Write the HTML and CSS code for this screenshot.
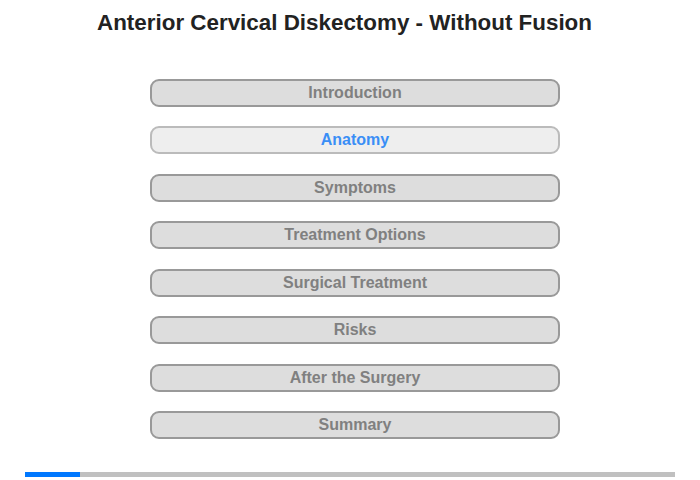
FILE: index.html
```html
<!DOCTYPE html>
<html>
<head>
<meta charset="utf-8">
<link rel="stylesheet" href="styles.css">
</head>
<body>
<div class="page">
  <h1 class="title">Anterior Cervical Diskectomy - Without Fusion</h1>
  <nav class="menu">
    <div class="item">Introduction</div>
    <div class="item active">Anatomy</div>
    <div class="item">Symptoms</div>
    <div class="item">Treatment Options</div>
    <div class="item">Surgical Treatment</div>
    <div class="item">Risks</div>
    <div class="item">After the Surgery</div>
    <div class="item">Summary</div>
  </nav>
  <div class="progress"><div class="progress-fill" style="width:55px"></div></div>
</div>
</body>
</html>
```
FILE: styles.css
```css
html, body {
  margin: 0;
  padding: 0;
  background: #fff;
}
.page {
  width: 700px;
  height: 480px;
  font-family: "Liberation Sans", Arial, sans-serif;
  display: flex;
  flex-direction: column;
}
.title {
  margin: 11px 0 0 0;
  padding-right: 11px;
  font-size: 22.4px;
  font-weight: bold;
  line-height: 24px;
  color: #222;
  text-align: center;
}
.menu {
  margin-top: 44px;
  margin-left: 150px;
  width: 410px;
  display: flex;
  flex-direction: column;
  gap: 19.43px;
}
.item {
  box-sizing: border-box;
  height: 28px;
  border: 2px solid #999;
  border-radius: 9px;
  background: #ddd;
  color: #808080;
  font-size: 16px;
  font-weight: bold;
  line-height: 24px;
  text-align: center;
}
.item.active {
  background: #eee;
  border-color: #bbb;
  color: #3a8ef6;
}
.progress {
  margin-top: 33px;
  margin-left: 25px;
  width: 650px;
  height: 5px;
  background: #c0c0c0;
}
.progress-fill {
  height: 5px;
  background: #0078ff;
}
```
